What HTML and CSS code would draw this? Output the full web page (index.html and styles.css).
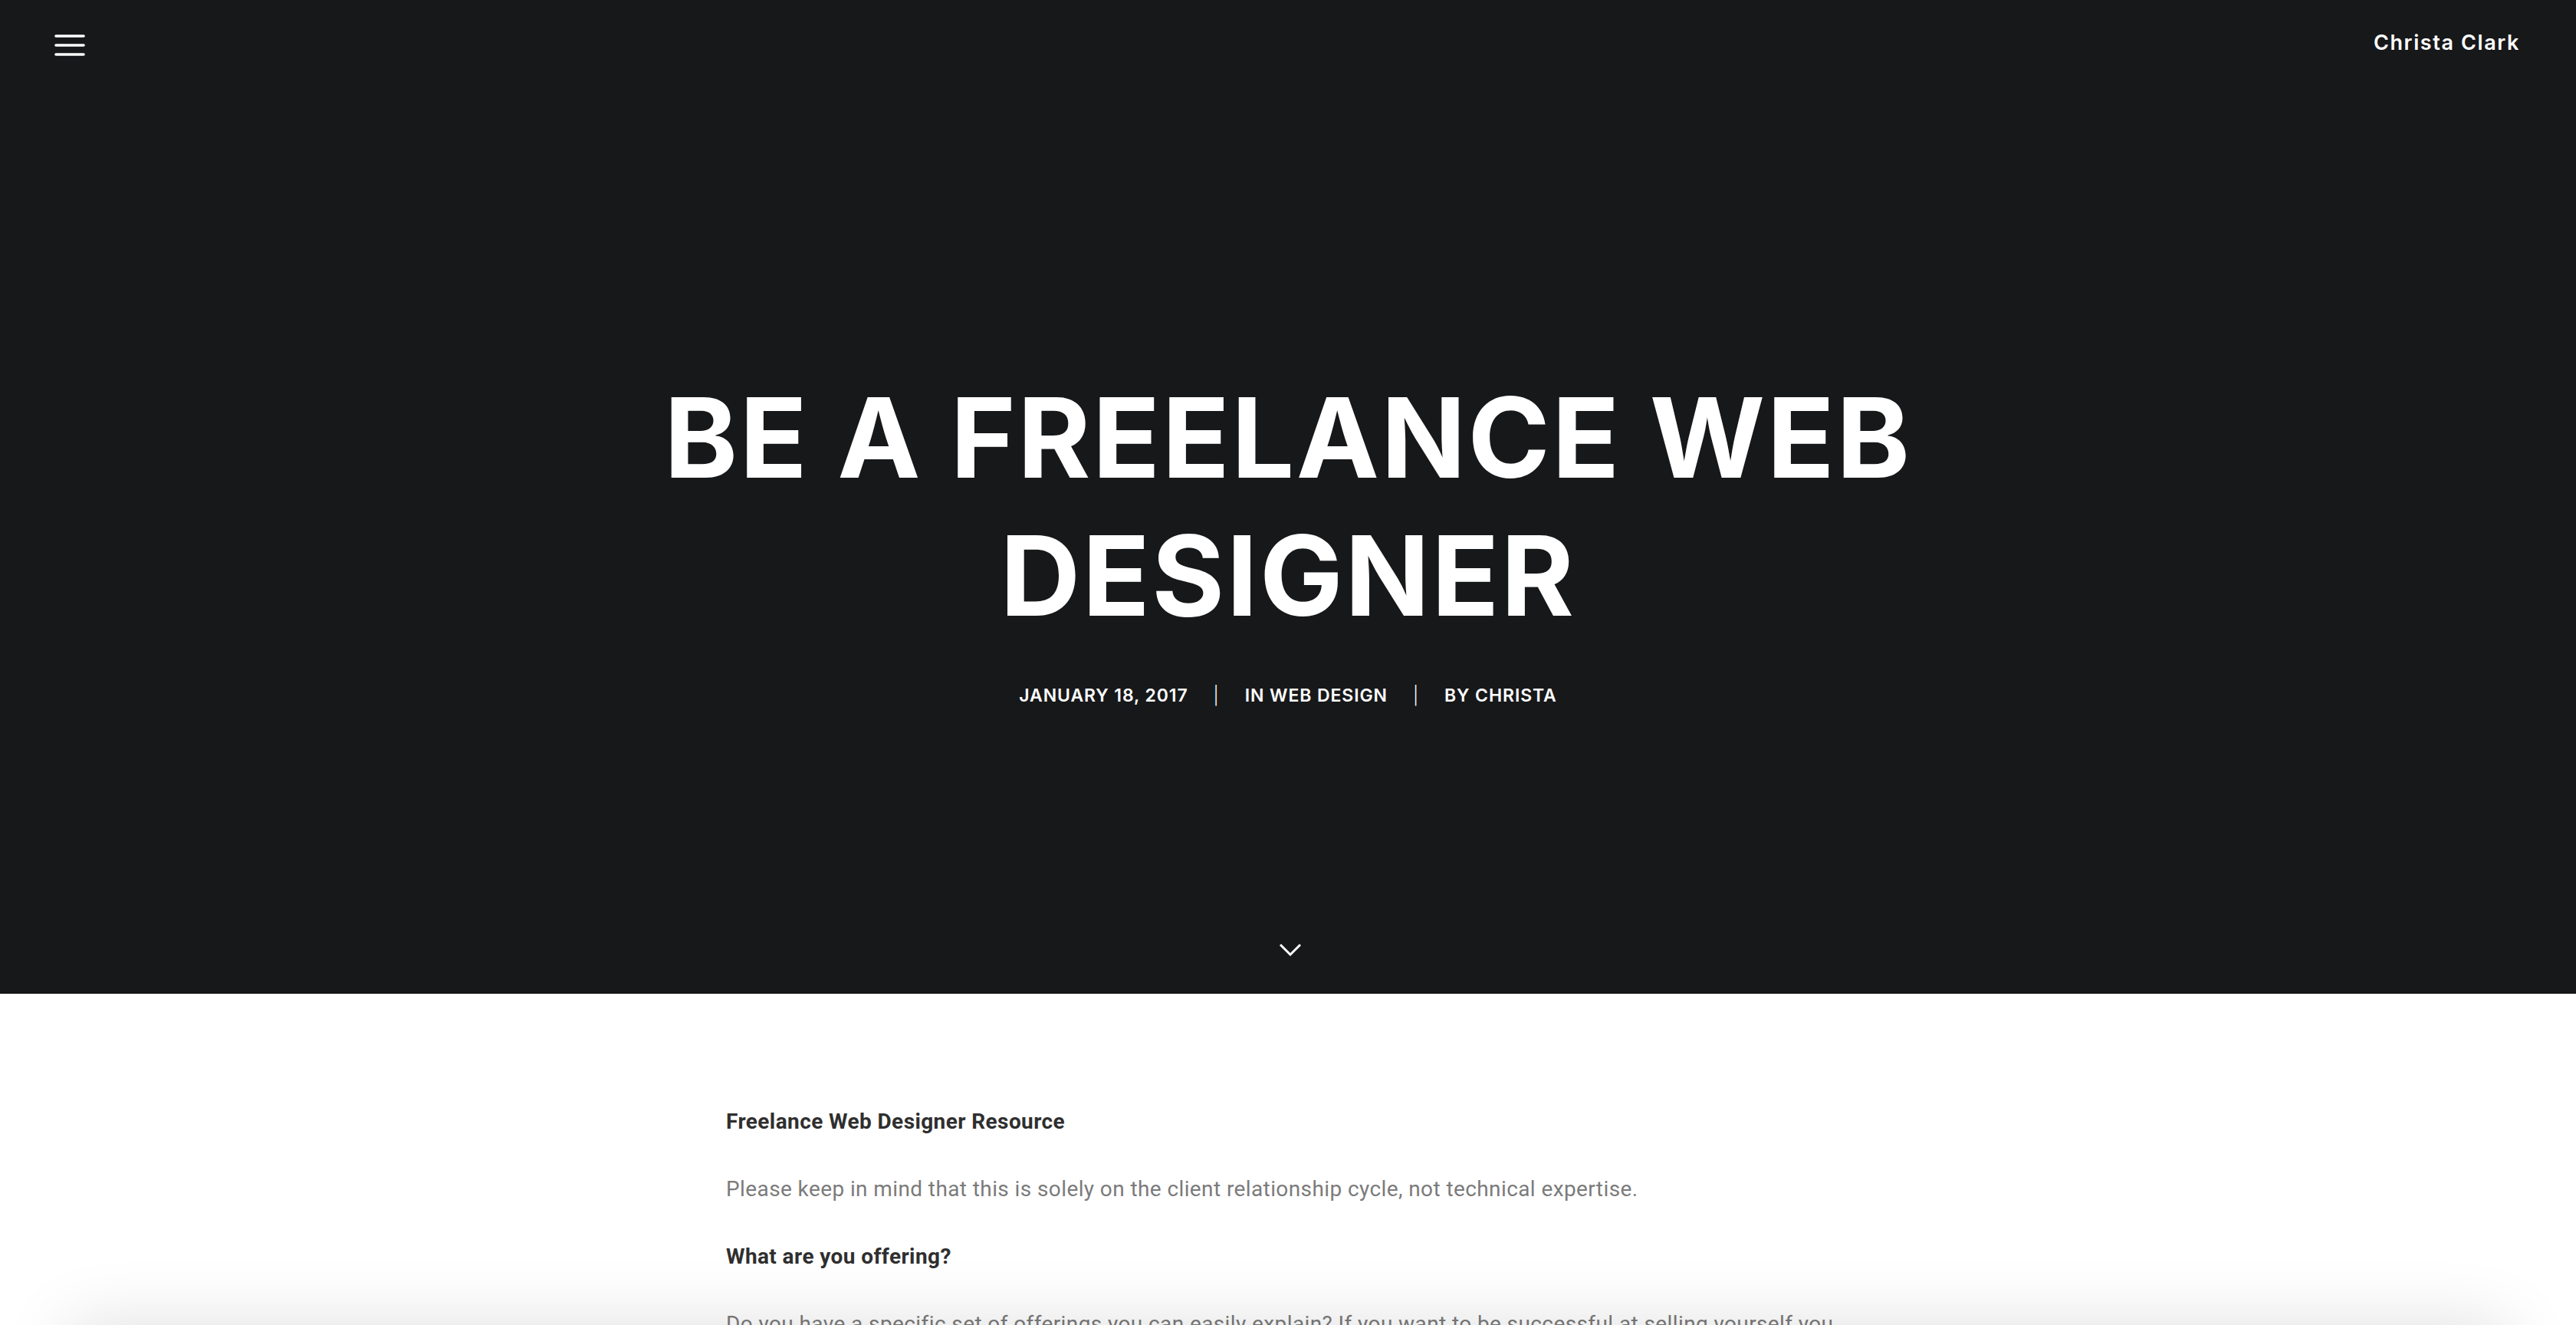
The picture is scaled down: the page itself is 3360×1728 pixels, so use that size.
FILE: index.html
```html
<!DOCTYPE html>
<html lang="en">
<head>
<meta charset="utf-8">
<title>Be a Freelance Web Designer – Christa Clark</title>
<link rel="stylesheet" href="styles.css">
</head>
<body>
<header class="hero">
  <div class="topbar">
    <button class="menu-btn" aria-label="Menu">
      <svg width="40" height="30" viewBox="0 0 40 30"><g stroke="#fff" stroke-width="3.6" stroke-linecap="round"><line x1="2" y1="2" x2="38" y2="2"/><line x1="2" y1="14" x2="38" y2="14"/><line x1="2" y1="26" x2="38" y2="26"/></g></svg>
    </button>
    <a class="brand" href="#">Christa Clark</a>
  </div>
  <div class="hero-main">
    <h1 class="title">Be a Freelance Web Designer</h1>
    <div class="meta">
      <span>January 18, 2017</span>
      <span class="sep">|</span>
      <span>In Web Design</span>
      <span class="sep">|</span>
      <span>By Christa</span>
    </div>
  </div>
  <div class="scroll-down">
    <svg width="30" height="18" viewBox="0 0 30 18"><polyline points="2,2 15,15 28,2" fill="none" stroke="#fff" stroke-width="3"/></svg>
  </div>
</header>
<main class="content">
  <article class="post">
    <p class="strong">Freelance Web Designer Resource</p>
    <p>Please keep in mind that this is solely on the client relationship cycle, not technical expertise.</p>
    <p class="strong">What are you offering?</p>
    <p>Do you have a specific set of offerings you can easily explain? If you want to be successful at selling yourself you need to be able to clearly communicate what it is you do and why it matters to your potential clients.</p>
  </article>
</main>
<div class="bottom-bar"></div>
</body>
</html>
```

FILE: styles.css
```css
html, body {
  margin: 0;
  padding: 0;
}
body {
  background: #fff;
  font-family: "Roboto", "Liberation Sans", sans-serif;
  overflow: hidden;
}
.hero {
  background: #17181a;
  height: 1296px;
  display: flex;
  flex-direction: column;
  color: #fff;
}
.topbar {
  display: flex;
  justify-content: space-between;
  align-items: center;
  padding: 34px 73px 0 71px;
  height: 40px;
}
.menu-btn {
  background: none;
  border: 0;
  padding: 0;
  display: flex;
  margin-top: 12px;
}
.brand {
  color: #fff;
  text-decoration: none;
  font-family: "Inter", "Liberation Sans", sans-serif;
  font-weight: 600;
  font-size: 27px;
  letter-spacing: 1.6px;
  margin-top: 2px;
}
.hero-main {
  display: flex;
  flex-direction: column;
  align-items: center;
  padding-top: 407px;
}
.title {
  margin: 0;
  width: 1700px;
  text-align: center;
  text-transform: uppercase;
  font-family: "Inter", "Liberation Sans", sans-serif;
  font-weight: 700;
  font-size: 145px;
  line-height: 180px;
  letter-spacing: 2.5px;
}
.meta {
  display: flex;
  gap: 33px;
  margin-top: 52px;
  font-family: "Inter", "Liberation Sans", sans-serif;
  font-weight: 600;
  font-size: 23px;
  letter-spacing: 0.9px;
  text-transform: uppercase;
}
.meta .sep {
  font-weight: 300;
}
.scroll-down {
  margin-top: auto;
  margin-bottom: 48px;
  display: flex;
  justify-content: center;
  padding-left: 6px;
}
.content {
  display: flex;
  justify-content: center;
}
.post {
  width: 1466px;
  padding-top: 143px;
}
.post p {
  margin: 0 0 40px;
  font-size: 28px;
  line-height: 48px;
  letter-spacing: 0.4px;
  color: #7b7b7b;
}
.post p.strong {
  color: #2f2f2f;
  font-weight: 700;
}
.bottom-bar {
  position: fixed;
  left: 90px;
  right: 90px;
  bottom: -120px;
  height: 120px;
  background: #fff;
  box-shadow: 0 0 90px rgba(0, 0, 0, 0.13);
}
```
